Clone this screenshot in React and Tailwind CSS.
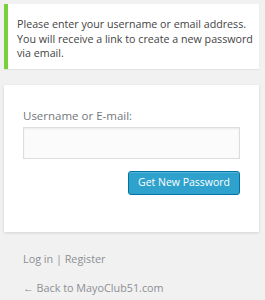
export default function App() {
  return (
    <div className="min-h-[300px] w-[265px] bg-[#f1f1f1] pl-1 pr-[6px] pt-1 font-['Open_Sans',sans-serif]">
      <div className="border-l-4 border-[#7ad03a] bg-white pb-[8px] pl-[9px] pr-0 pt-[13px] text-[10.7px] leading-[14.6px] text-[#444] shadow-[0_1px_1px_rgba(0,0,0,0.06)]">
        Please enter your username or email address. You will receive a link to create a new password via email.
      </div>
      <form className="mt-4 flex flex-col bg-white px-[19px] pb-[37px] pt-[23px] shadow-[0_1px_3px_rgba(0,0,0,0.13)]">
        <label className="text-[11.5px] leading-4 text-[#72777c]">Username or E-mail:</label>
        <input type="text" className="mt-[3px] h-8 w-full border border-[#ddd] bg-[#fbfbfb] shadow-[inset_0_1px_2px_rgba(0,0,0,0.07)] outline-none" />
        <div className="mt-[12px] flex justify-end">
          <button type="button" className="h-6 rounded-[3px] border border-[#0074a2] bg-[#2ea2cc] px-[9px] text-[10.5px] text-white shadow-[inset_0_1px_0_rgba(120,200,230,0.5)]">
            Get New Password
          </button>
        </div>
      </form>
      <div className="px-[19px] pt-[19px] text-[10.8px] leading-[15px] text-[#8c8f94]">
        <p>
          <a>Log in</a> | <a>Register</a>
        </p>
        <p className="mt-[14px]">
          <a>← Back to MayoClub51.com</a>
        </p>
      </div>
    </div>
  );
}
